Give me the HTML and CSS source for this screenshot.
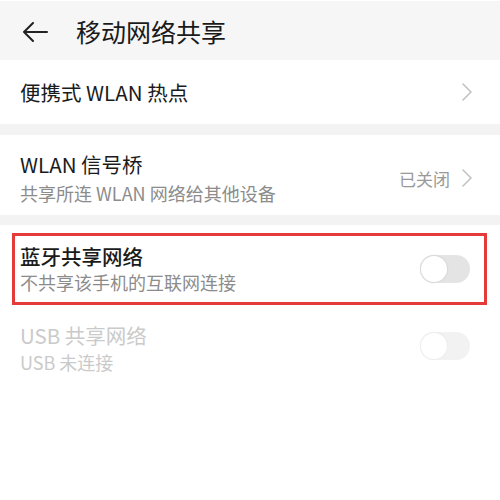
FILE: index.html
```html
<!DOCTYPE html>
<html>
    <head>
        <title>移动网络共享</title>
        <link rel="stylesheet" href="styles.css">
    </head>
    <body class="body">

        <!-- Title bar -->
        <div class="header">
            <svg class="backIcon" width="26" height="20" viewBox="0 0 26 20">
                <path d="M25 10 H2 M11 1 L2 10 L11 19" fill="none" stroke="#222" stroke-width="2" stroke-linecap="round" stroke-linejoin="round"/>
            </svg>
            <span class="headerTitle">移动网络共享</span>
        </div>

        <!-- Hotspot -->
        <div class="card">
            <div class="row single">
                <div class="rowText">
                    <div class="rowTitle">便携式 WLAN 热点</div>
                </div>
                <svg class="chevron" width="10" height="18" viewBox="0 0 10 18">
                    <path d="M1 1 L9 9 L1 17" fill="none" stroke="#c2c2c2" stroke-width="1.6" stroke-linecap="round" stroke-linejoin="round"/>
                </svg>
            </div>
        </div>

        <div class="gap"></div>

        <!-- Bridge -->
        <div class="card">
            <div class="row bridge">
                <div class="rowText">
                    <div class="rowTitle">WLAN 信号桥</div>
                    <div class="rowSub">共享所连 WLAN 网络给其他设备</div>
                </div>
                <span class="status">已关闭</span>
                <svg class="chevron" width="10" height="18" viewBox="0 0 10 18">
                    <path d="M1 1 L9 9 L1 17" fill="none" stroke="#c2c2c2" stroke-width="1.6" stroke-linecap="round" stroke-linejoin="round"/>
                </svg>
            </div>
        </div>

        <div class="gap small"></div>

        <!-- Tethering -->
        <div class="card last">
            <div class="row marked">
                <div class="rowText">
                    <div class="rowTitle">蓝牙共享网络</div>
                    <div class="rowSub">不共享该手机的互联网连接</div>
                </div>
                <span class="toggle"><span class="knob"></span></span>
            </div>

            <div class="row disabled">
                <div class="rowText">
                    <div class="rowTitle">USB 共享网络</div>
                    <div class="rowSub">USB 未连接</div>
                </div>
                <span class="toggle"><span class="knob"></span></span>
            </div>
        </div>

    </body>
</html>
```

FILE: styles.css
```css
 body{
     margin: 0;
     background-color: #ffffff;
     font-family: "Noto Sans CJK SC", "Noto Sans", sans-serif;
     color: #1b1b1b;
 }

 /* Header */

 .header{
     height: 59px;
     margin-top: 1px;
     background-color: #f6f6f6;
     display: flex;
     align-items: center;
     padding-left: 22px;
 }

 .backIcon{
     margin-top: 2px;
 }

 .headerTitle{
     font-size: 25px;
     margin-left: 28px;
     color: #1a1a1a;
 }

 /* Cards */

 .card{
     background: #ffffff;
 }

 .gap{
     height: 11px;
     background: #f3f3f3;
 }

 .gap.small{
     height: 10px;
 }

 .row{
     display: flex;
     align-items: center;
     padding: 0 28px 0 20px;
 }

 .row.single{
     height: 64px;
 }

 .row.bridge{
     height: 80px;
     padding-top: 6px;
     box-sizing: border-box;
 }

 .rowText{
     flex: 1;
 }

 .rowTitle{
     font-size: 20.5px;
     line-height: 26px;
 }

 .rowSub{
     font-size: 18px;
     line-height: 26px;
     color: #8c8c8c;
     margin-top: 3px;
 }

 .status{
     font-size: 17px;
     color: #999999;
     margin-right: 12px;
 }

 /* Toggles */

 .card.last{
     padding-top: 8px;
 }

 .row.marked{
     margin: 0 13px 0 12px;
     border: 3px solid #e53a3a;
     padding: 0 14px 0 5px;
     height: 72px;
     box-sizing: border-box;
 }

 .row.marked .rowTitle{
     font-weight: 500;
 }

 .row.marked .rowSub{
     margin-top: 0;
 }

 .row.disabled{
     padding: 17px 30px 0 20px;
 }

 .row.disabled .rowTitle, .row.disabled .rowSub{
     color: #cacaca;
 }

 .row.disabled .rowSub{
     margin-top: 1px;
 }

 .toggle{
     width: 50px;
     height: 28px;
     border-radius: 14px;
     background: #e4e4e4;
     display: flex;
     align-items: center;
     padding-left: 1px;
     box-sizing: border-box;
 }

 .knob{
     width: 26px;
     height: 26px;
     border-radius: 50%;
     background: #ffffff;
     box-shadow: 0 0 1px 1px #d8d8d8;
 }

 .row.disabled .toggle{
     background: #f2f2f2;
     margin-top: -6px;
 }

 .row.disabled .knob{
     box-shadow: 0 0 1px 1px #ededed;
 }
```
